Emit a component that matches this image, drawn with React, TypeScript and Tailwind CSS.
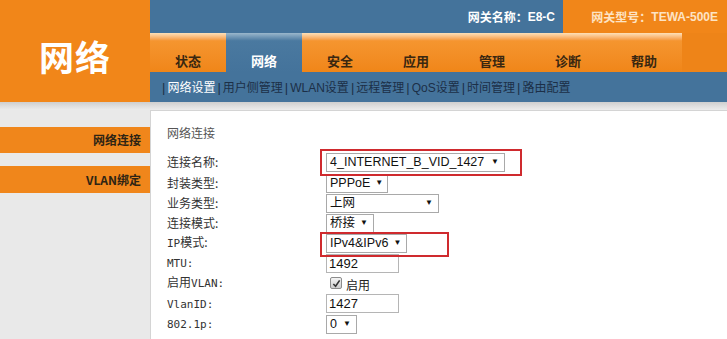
import React from "react";

const tabs = ["状态", "网络", "安全", "应用", "管理", "诊断", "帮助"];
const subnav = [
  "网络设置",
  "用户侧管理",
  "WLAN设置",
  "远程管理",
  "QoS设置",
  "时间管理",
  "路由配置",
];

type SelectProps = { value: string; width: string };

const FakeSelect = ({ value, width }: SelectProps) => (
  <div
    className={`${width} h-[19px] border border-[#a9a9a9] bg-white flex items-center justify-between pl-[3px] pr-[5px] text-[12.5px] leading-none text-[#111] font-['Liberation_Sans','Noto_Sans_CJK_SC',sans-serif]`}
  >
    <span>{value}</span>
    <span className="ml-[5px] text-[8px]">▼</span>
  </div>
);

const FakeInput = ({ value }: { value: string }) => (
  <div className="w-[73px] h-[19px] border border-[#b5b5b5] bg-white flex items-center pl-[2px] text-[13px] leading-none text-[#111] font-['Liberation_Sans',sans-serif]">
    {value}
  </div>
);

const Mono = ({ children }: { children: React.ReactNode }) => (
  <span className="font-['DejaVu_Sans_Mono',monospace] text-[11px]">
    {children}
  </span>
);

const Row = ({
  h,
  label,
  children,
}: {
  h: string;
  label: React.ReactNode;
  children: React.ReactNode;
}) => (
  <div className={`${h} flex items-center`}>
    <div className="w-[159px] text-[12px] text-[#333]">{label}</div>
    <div className="flex items-center">{children}</div>
  </div>
);

const App = () => {
  return (
    <div className="w-[727px] h-[339px] overflow-hidden bg-[#e9e9e9] font-['Noto_Sans_CJK_SC',sans-serif]">
      {/* header */}
      <div className="flex h-[102px]">
        <div className="w-[150px] bg-[#f18619] flex items-center justify-center pt-[10px] text-white text-[35px] font-bold tracking-[1px]">
          网络
        </div>
        <div className="flex-1 flex flex-col">
          <div className="h-[33px] flex">
            <div className="flex-1 bg-[#44739b] flex items-center justify-end pr-[8px] text-white text-[12px] font-bold">
              网关名称：<span className="font-['Liberation_Sans',sans-serif]">E8-C</span>
            </div>
            <div className="w-[164px] bg-[#f18619] flex items-center justify-end pr-[9px] text-[#fde3c4] text-[12px] font-bold">
              网关型号：<span className="font-['Liberation_Sans',sans-serif]">TEWA-500E</span>
            </div>
          </div>
          <div className="h-[39px] flex bg-[#44739b]">
            {tabs.map((t) =>
              t === "网络" ? (
                <div
                  key={t}
                  className="w-[76px] flex items-end justify-center pb-[2px] leading-[18px] text-[13px] font-bold text-white bg-gradient-to-b from-[#9ab7cc] via-[#4a79a0] via-[20%] to-[#44739b]"
                >
                  {t}
                </div>
              ) : (
                <div
                  key={t}
                  className="w-[76px] flex items-end justify-center pb-[2px] leading-[18px] text-[13px] font-bold text-[#3a2710] bg-gradient-to-b from-[#fde0b8] via-[#f5952f] via-[20%] to-[#f08618]"
                >
                  {t}
                </div>
              )
            )}
            <div className="flex-1 bg-[#ee8418]" />
          </div>
          <div className="h-[30px] bg-[#44739b] flex items-center pt-[2px] pl-[10px] text-[12px] text-[#1c2f47] font-['Liberation_Sans','Noto_Sans_CJK_SC',sans-serif]">
            {subnav.map((s, i) => (
              <React.Fragment key={s}>
                <span className="mx-[2px] text-[13px]">|</span>
                <span className={i === 0 ? "text-white" : ""}>{s}</span>
              </React.Fragment>
            ))}
          </div>
        </div>
      </div>

      <div className="h-[8px] bg-gradient-to-b from-[#cfcfcf] to-[#ececec]" />

      {/* body */}
      <div className="flex h-[229px]">
        <div className="w-[150px] pt-[17px] flex flex-col gap-[13px]">
          <div className="h-[26px] bg-[#f0861b] flex items-center justify-end pr-[9px] text-[12px] font-bold text-[#2e2414]">
            网络连接
          </div>
          <div className="h-[27px] bg-[#f0861b] flex items-center justify-end pr-[9px] text-[12px] font-bold text-[#2e2414]">
            VLAN绑定
          </div>
        </div>

        <div className="flex-1 bg-white border-t border-l border-[#d4d4d4] pl-[16px] pt-[13px]">
          <div className="h-[18px] leading-[18px] text-[12px] text-[#555]">
            网络连接
          </div>
          <div className="mt-[9px]">
            <Row h="h-[22px]" label="连接名称:">
              <div className="relative">
                <div className="absolute -left-[6px] -top-[4px] w-[202px] h-[27px] border-2 border-[#cf2a2e]" />
                <FakeSelect value="4_INTERNET_B_VID_1427" width="w-[179px]" />
              </div>
            </Row>
            <Row h="h-[20px]" label="封装类型:">
              <FakeSelect value="PPPoE" width="w-[62px]" />
            </Row>
            <Row h="h-[20px]" label="业务类型:">
              <FakeSelect value="上网" width="w-[113px]" />
            </Row>
            <Row h="h-[20px]" label="连接模式:">
              <FakeSelect value="桥接" width="w-[48px]" />
            </Row>
            <Row
              h="h-[20px]"
              label={
                <>
                  <Mono>IP</Mono>模式:
                </>
              }
            >
              <div className="relative">
                <div className="absolute -left-[6px] -top-[2px] w-[129px] h-[25px] border-2 border-[#cf2a2e]" />
                <FakeSelect value="IPv4&IPv6" width="w-[81px]" />
              </div>
            </Row>
            <Row h="h-[20px]" label={<Mono>MTU:</Mono>}>
              <FakeInput value="1492" />
            </Row>
            <Row
              h="h-[20px]"
              label={
                <>
                  启用<Mono>VLAN:</Mono>
                </>
              }
            >
              <div className="ml-[4px] w-[12px] h-[12px] border border-[#8c8c8c] rounded-[2px] bg-gradient-to-b from-[#f4f4f4] to-[#cdcdcd] flex items-center justify-center">
                <svg viewBox="0 0 10 10" className="w-[9px] h-[9px]">
                  <path
                    d="M1.5 5.5 L4 8 L8.5 1.5"
                    stroke="#333"
                    strokeWidth="1.8"
                    fill="none"
                  />
                </svg>
              </div>
              <span className="ml-[4px] mt-[4px] text-[12px] text-[#222]">
                启用
              </span>
            </Row>
            <Row h="h-[21px]" label={<Mono>VlanID:</Mono>}>
              <FakeInput value="1427" />
            </Row>
            <Row h="h-[20px]" label={<Mono>802.1p:</Mono>}>
              <FakeSelect value="0" width="w-[31px]" />
            </Row>
            <Row h="h-[20px]" label="">
              <div className="mt-[6px] ml-[4px] w-[12px] h-[12px] border border-[#c4c4c4] rounded-[2px] bg-[#f4f4f4]" />
            </Row>
          </div>
        </div>
      </div>
    </div>
  );
};

export default App;
